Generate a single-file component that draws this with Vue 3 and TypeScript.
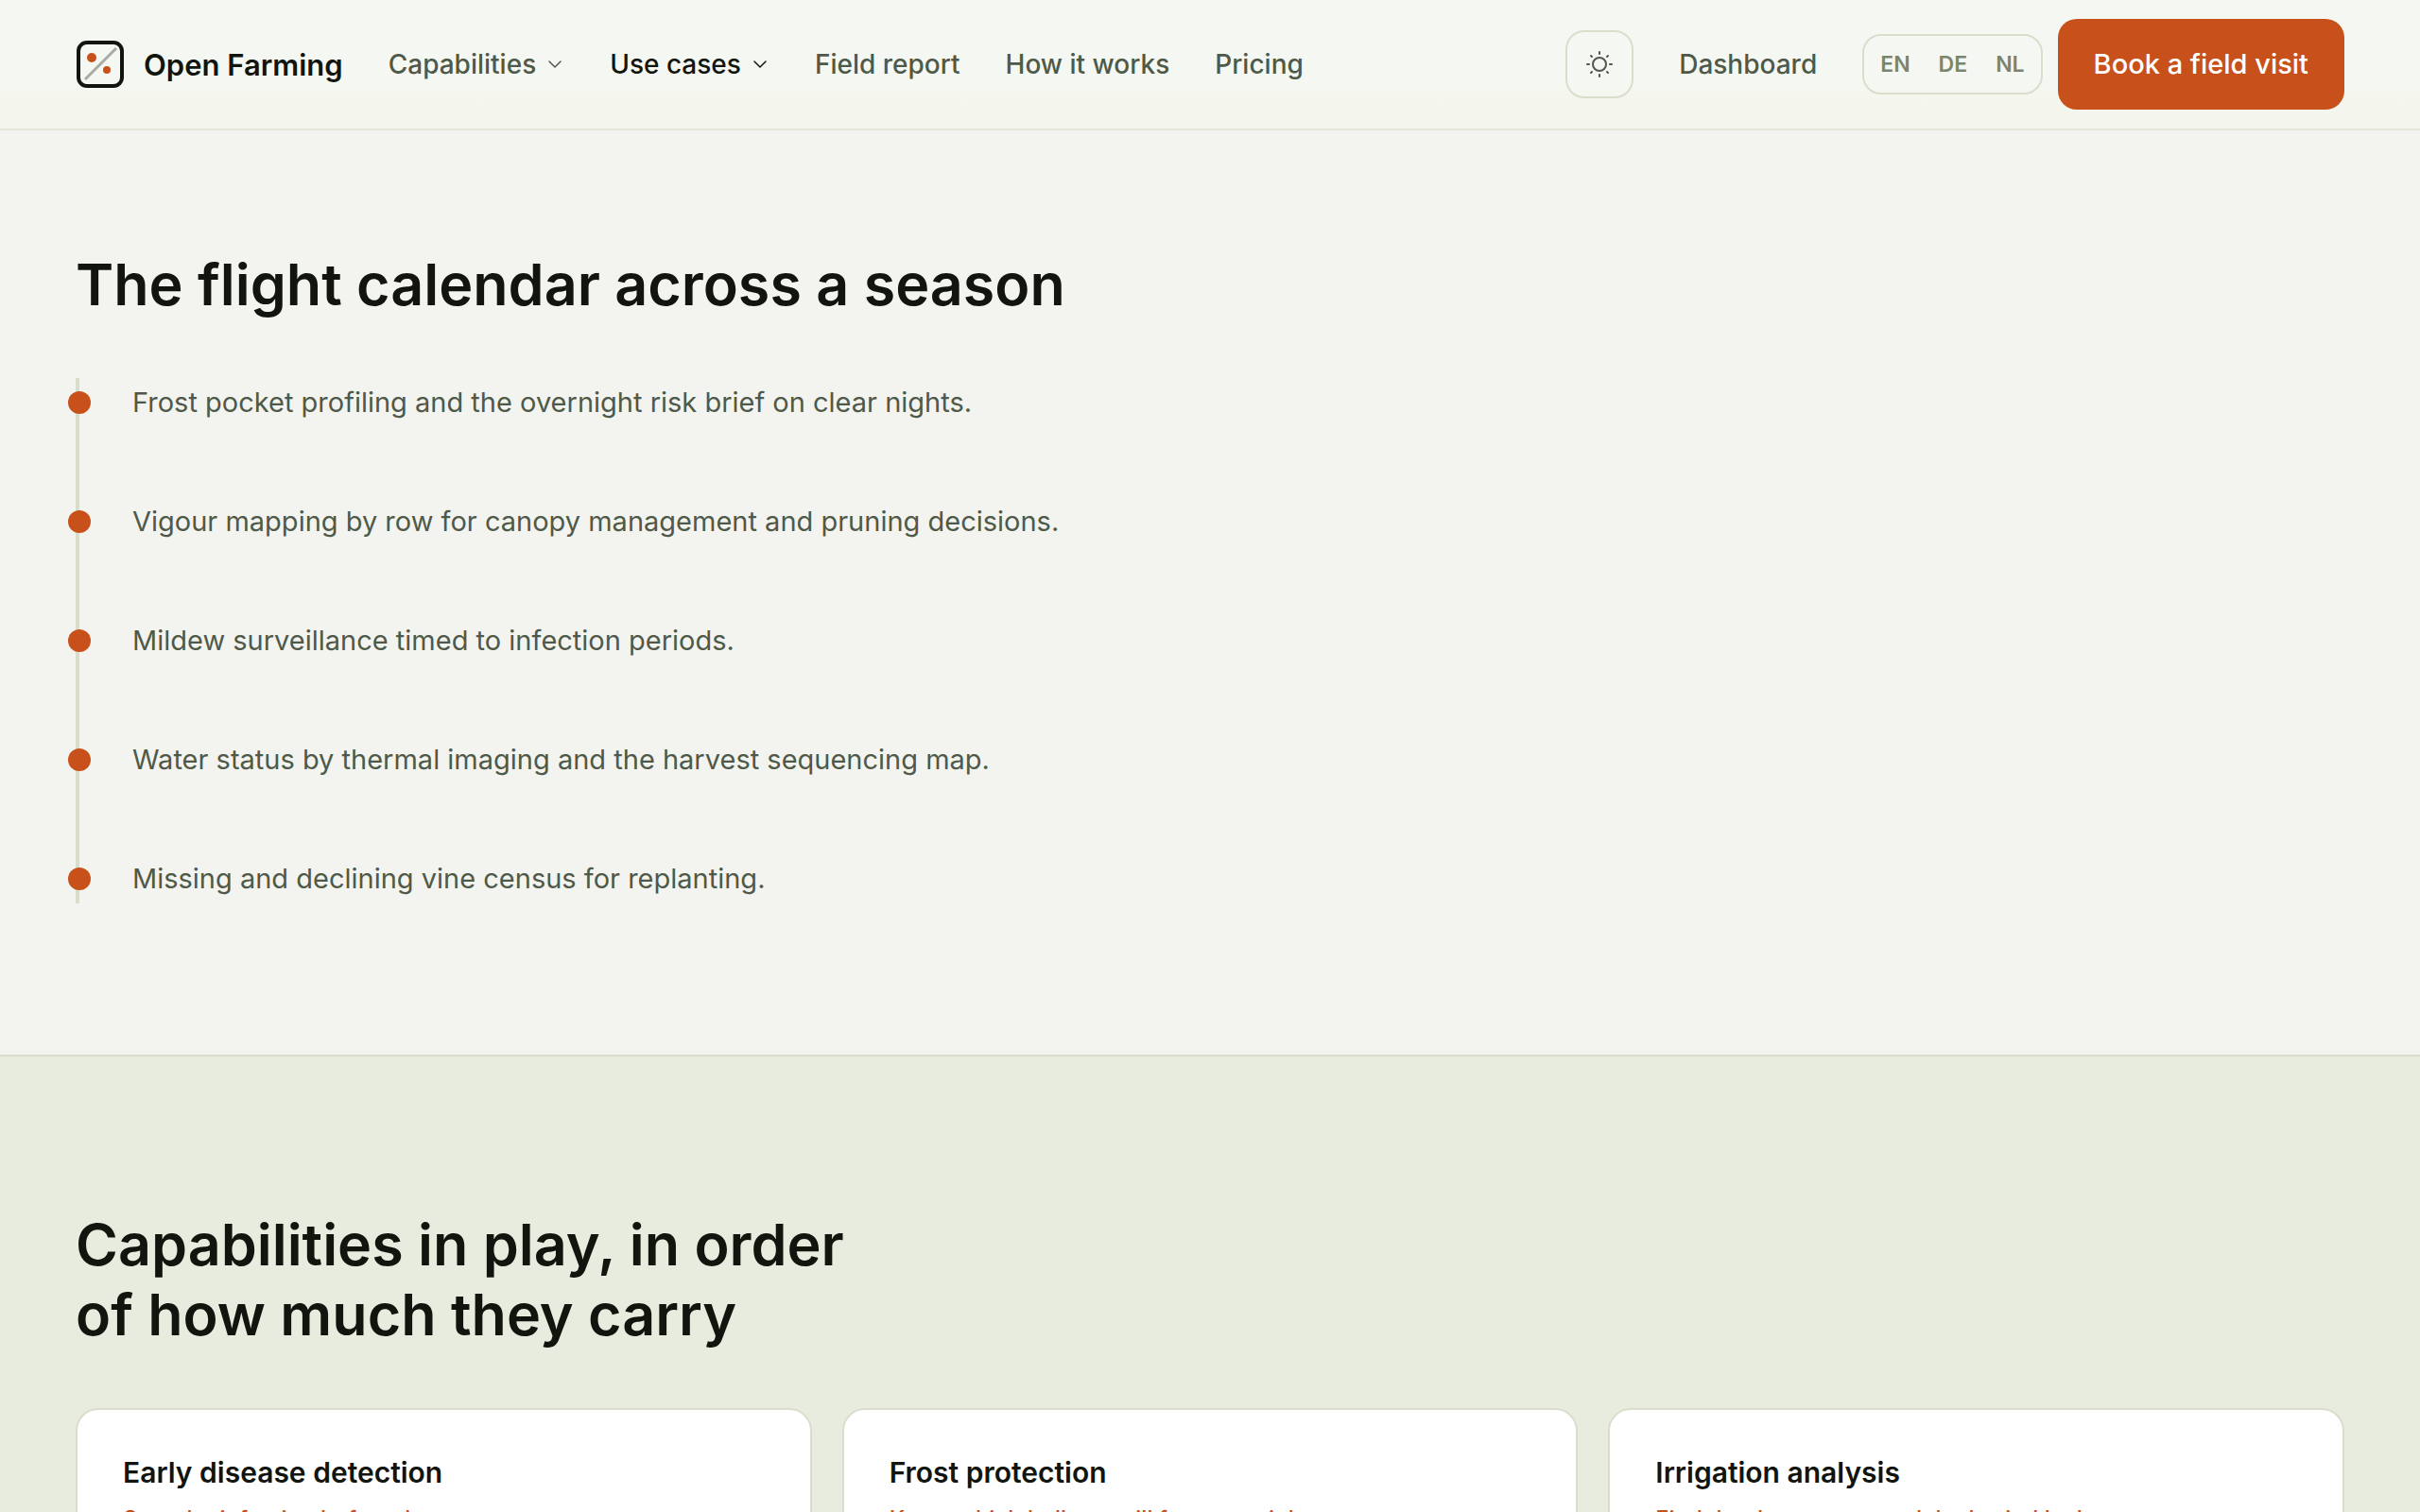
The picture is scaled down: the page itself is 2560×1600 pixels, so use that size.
<script setup lang="ts">
interface NavItem {
  label: string
  menu?: boolean
  current?: boolean
}

interface Capability {
  title: string
  note: string
}

const nav: NavItem[] = [
  { label: 'Capabilities', menu: true },
  { label: 'Use cases', menu: true, current: true },
  { label: 'Field report' },
  { label: 'How it works' },
  { label: 'Pricing' },
]

const languages: string[] = ['EN', 'DE', 'NL']

const flights: string[] = [
  'Frost pocket profiling and the overnight risk brief on clear nights.',
  'Vigour mapping by row for canopy management and pruning decisions.',
  'Mildew surveillance timed to infection periods.',
  'Water status by thermal imaging and the harvest sequencing map.',
  'Missing and declining vine census for replanting.',
]

const capabilities: Capability[] = [
  { title: 'Early disease detection', note: 'Spot the infection before the eye' },
  { title: 'Frost protection', note: 'Know which hollows will freeze tonight' },
  { title: 'Irrigation analysis', note: 'Find the dry corners and the buried leak' },
]
</script>

<template>
  <div class="page">
    <header class="bar">
      <a class="brand" href="#">
        <svg class="brand-mark" viewBox="0 0 52 52" aria-hidden="true">
          <rect x="3" y="3" width="46" height="46" rx="9" fill="none" stroke="#11150e" stroke-width="4" />
          <path d="M10 42 43 9" stroke="#a9aca5" stroke-width="3" />
          <circle cx="17" cy="19" r="5" fill="#c8511b" />
          <circle cx="33" cy="32" r="4" fill="#c8511b" />
        </svg>
        <span>Open Farming</span>
      </a>
      <nav class="nav" aria-label="Main">
        <template v-for="item in nav" :key="item.label">
          <button v-if="item.menu" type="button" class="nav-item" :class="{ current: item.current }">
            {{ item.label }}
            <svg class="chevron" viewBox="0 0 20 20" aria-hidden="true">
              <path d="M4 7l6 6 6-6" fill="none" stroke="currentColor" stroke-width="1.5" stroke-linecap="round" stroke-linejoin="round" />
            </svg>
          </button>
          <a v-else class="nav-item" href="#">{{ item.label }}</a>
        </template>
      </nav>
      <div class="actions">
        <button type="button" class="theme" aria-label="Switch theme">
          <svg viewBox="0 0 32 32" aria-hidden="true">
            <g fill="none" stroke="currentColor" stroke-width="2" stroke-linecap="round">
              <circle cx="16" cy="16" r="7" />
              <path d="M16 3v2M16 27v2M3 16h2M27 16h2M7 7l1 1M24 24l1 1M25 7l-1 1M8 24l-1 1" />
            </g>
          </svg>
        </button>
        <a class="nav-item dashboard" href="#">Dashboard</a>
        <div class="languages" role="group" aria-label="Language">
          <button v-for="code in languages" :key="code" type="button">{{ code }}</button>
        </div>
        <a class="cta" href="#">Book a field visit</a>
      </div>
    </header>

    <main>
      <section class="calendar">
        <h2>The flight calendar across a season</h2>
        <ol class="timeline">
          <li v-for="flight in flights" :key="flight">{{ flight }}</li>
        </ol>
      </section>

      <section class="capabilities">
        <h2>Capabilities in play, in order<br />of how much they carry</h2>
        <div class="cards">
          <article v-for="item in capabilities" :key="item.title" class="card">
            <h3>{{ item.title }}</h3>
            <p>{{ item.note }}</p>
          </article>
        </div>
      </section>
    </main>
  </div>
</template>

<style>
body {
  margin: 0;
  background: #f3f4ef;
}
</style>

<style scoped>
.page {
  height: 100vh;
  overflow: hidden;
  background: #f3f4ef;
  color: #11150e;
  font-family: Inter, "Liberation Sans", sans-serif;
}

button {
  padding: 0;
  border: 0;
  background: none;
  font: inherit;
  color: inherit;
}

a {
  color: inherit;
  text-decoration: none;
}

.bar {
  display: flex;
  align-items: center;
  gap: 48px;
  padding: 20px 80px;
  border-bottom: 2px solid #e4e6da;
  background: linear-gradient(#f5f8f2 60%, #f4f6ed 85%);
}

.brand {
  display: flex;
  align-items: center;
  gap: 20px;
  font-size: 31px;
  font-weight: 600;
  white-space: nowrap;
}

.brand-mark {
  width: 52px;
  height: 52px;
}

.nav {
  display: flex;
  align-items: center;
  gap: 48px;
}

.nav-item {
  display: flex;
  align-items: center;
  gap: 10px;
  font-size: 28px;
  font-weight: 500;
  line-height: 40px;
  color: #4f5949;
  white-space: nowrap;
}

.nav-item.current {
  color: #11150e;
}

.chevron {
  width: 20px;
  height: 20px;
}

.actions {
  display: flex;
  align-items: center;
  gap: 16px;
  margin-left: auto;
}

.theme {
  display: grid;
  place-items: center;
  width: 72px;
  height: 72px;
  box-sizing: border-box;
  border: 2px solid #d9decc;
  border-radius: 20px;
  color: #4f5949;
}

.theme svg {
  width: 32px;
  height: 32px;
}

.dashboard {
  margin: 0 32px;
}

.languages {
  display: flex;
  align-items: center;
  gap: 30px;
  height: 64px;
  box-sizing: border-box;
  padding: 0 17px;
  border: 2px solid #d9decc;
  border-radius: 20px;
  font-size: 23px;
  font-weight: 600;
  color: #7a8570;
}

.cta {
  padding: 28px 38px;
  border-radius: 20px;
  background: #c8511b;
  color: #ffffff;
  font-size: 29px;
  font-weight: 500;
  line-height: 40px;
  white-space: nowrap;
}

h2 {
  margin: 0 0 62px;
  font-size: 61px;
  font-weight: 600;
  line-height: 74px;
}

.calendar {
  padding: 126px 80px 160px;
}

.timeline {
  display: flex;
  flex-direction: column;
  gap: 74px;
  margin: 0;
  padding: 0 0 0 56px;
  border-left: 4px solid #d9decc;
  list-style: none;
  font-size: 29px;
  line-height: 52px;
  color: #4f5949;
}

.timeline li {
  position: relative;
}

.timeline li::before {
  content: "";
  position: absolute;
  top: 14px;
  left: -68px;
  width: 24px;
  height: 24px;
  border-radius: 50%;
  background: #c8511b;
}

.capabilities {
  padding: 162px 80px;
  border-top: 2px solid #d9decc;
  background: #e8ecdf;
}

.cards {
  display: grid;
  grid-template-columns: repeat(3, 1fr);
  gap: 32px;
}

.card {
  padding: 46px 48px;
  border: 2px solid #d9decc;
  border-radius: 24px;
  background: #ffffff;
}

.card h3 {
  margin: 0 0 10px;
  font-size: 30px;
  font-weight: 600;
  line-height: 40px;
}

.card p {
  margin: 0;
  font-size: 24px;
  font-weight: 500;
  line-height: 40px;
  color: #c8511b;
}
</style>
